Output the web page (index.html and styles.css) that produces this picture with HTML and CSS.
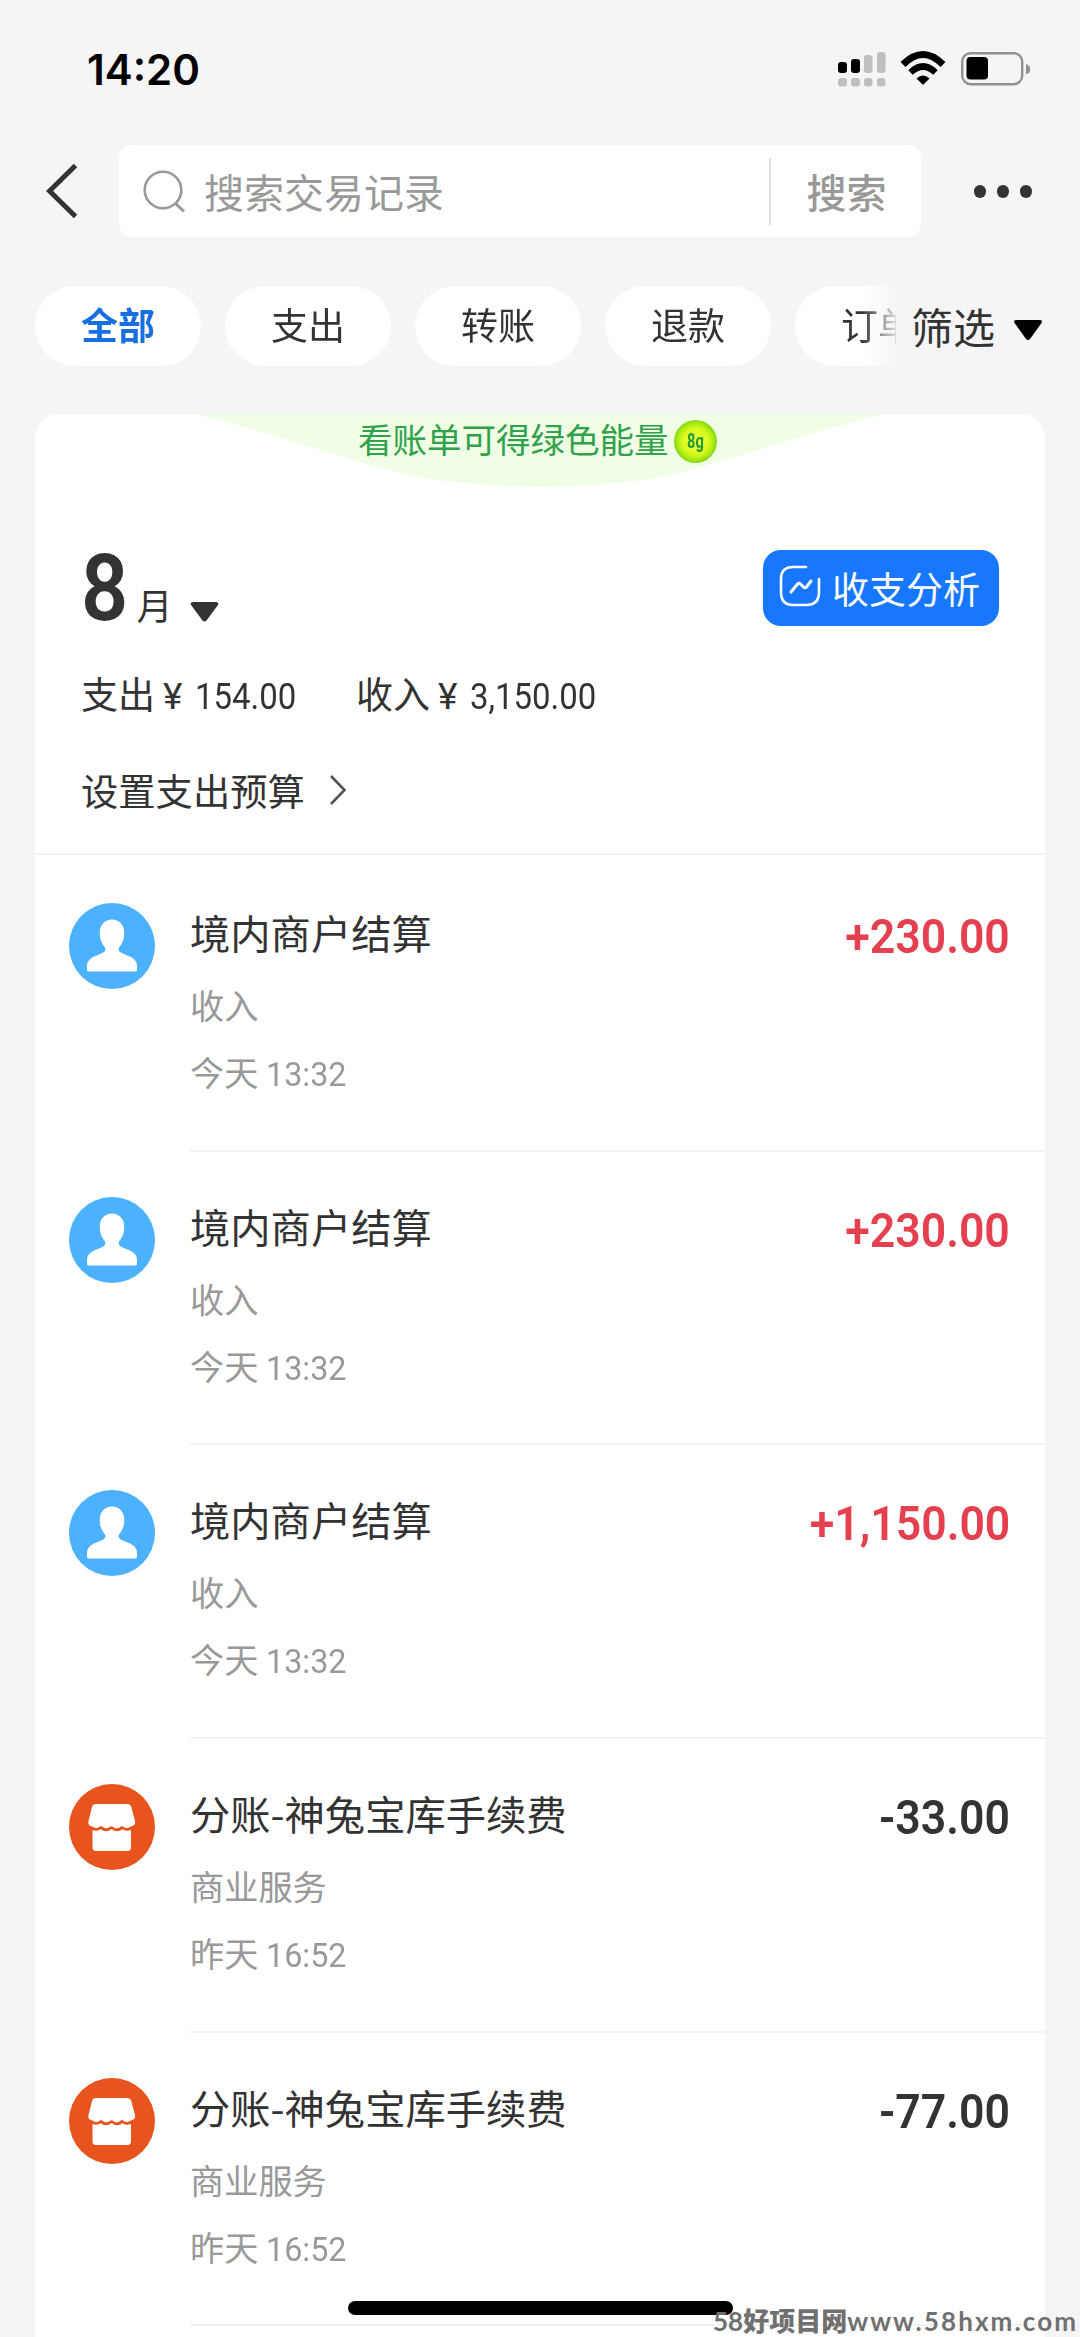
FILE: index.html
```html
<!DOCTYPE html>
<html lang="zh-CN">
<head>
    <meta charset="UTF-8">
    <meta name="viewport" content="width=device-width, initial-scale=1.0">
    <title>账单</title>
    <link rel="stylesheet" href="styles.css">
</head>
<body>
<!-- Shared icons -->
<svg class="sprite" width="0" height="0">
    <symbol id="icon-user" viewBox="0 0 86 86">
        <circle cx="43" cy="43" r="43" fill="#4cb1ff"/>
        <path d="M43 16.500c-7.500 0-12.300 5.500-12.300 13.500 0 6 2 10.500 5 14 1.500 2.500.5 4.500-1.500 5.500-5 2.500-9 3.500-12.500 6-3 2.500-3.700 5-3.700 8v3c0 1.500.7 2 2 2h46c1.300 0 2-.5 2-2v-3c0-3-.7-5.500-3.700-8-3.500-2.500-7.500-3.500-12.500-6-2-1-3-3-1.500-5.500 3-3.500 5-8 5-14 0-8-4.800-13.500-12.300-13.500z" fill="#fff"/>
    </symbol>
    <symbol id="icon-shop" viewBox="0 0 86 86">
        <circle cx="43" cy="43" r="43" fill="#e8541e"/>
        <path d="M27 20h31c2.200 0 3.800 1 4.300 3l3.700 14c.8 3-1 5-4.500 5.500q-3.500 3-7 .3-1.500-1.500-3 0-4 3-7.500 0-1.500-1.200-3 0-3.500 3-7.500 0-1.500-1.500-3 0-3.500 2.700-7-.3c-3.500-.5-4.500-2.500-4-5.500l3.500-14c.5-2 1.800-3 4-3z" fill="#fff"/>
        <path d="M23.500 46q4 2 8-.8 6 4 11-.3 5.500 4.300 11 .3 4 2.800 8.500.8v17c0 2.500-1 4-3.500 4h-31.500c-2.500 0-3.500-1.500-3.500-4z" fill="#fff"/>
    </symbol>
</svg>

<div class="phone">
    <div class="status-bar">
        <div class="clock">14:20</div>
        <div class="status-icons">
            <svg width="48" height="36" viewBox="0 0 48 36">
                <g fill="#000">
                    <rect x="0" y="11" width="9" height="11" rx="3"/>
                    <rect x="13" y="8" width="9" height="14" rx="3"/>
                </g>
                <g fill="#bfbfbf">
                    <rect x="26" y="4" width="8.500" height="18" rx="3"/>
                    <rect x="39" y="1" width="8.500" height="21" rx="3"/>
                    <rect x="0" y="27" width="9" height="8.500" rx="3"/>
                    <rect x="13" y="27" width="9" height="8.500" rx="3"/>
                    <rect x="26" y="27" width="8.500" height="8.500" rx="3"/>
                    <rect x="39" y="27" width="8.500" height="8.500" rx="3"/>
                </g>
            </svg>
            <svg class="wifi" width="46" height="36" viewBox="0 0 46 36">
                <path d="M3 13.500Q23-6.500 43 13.500" fill="none" stroke="#000" stroke-width="7"/>
                <path d="M10.500 21.500Q23 9.500 35.500 21.500" fill="none" stroke="#000" stroke-width="6.500"/>
                <path d="M16.500 27.500Q23 21.500 29.500 27.500L24 33q-1 1-2 0z" fill="#000"/>
            </svg>
            <svg class="battery" width="70" height="36" viewBox="0 0 70 36">
                <rect x="1.200" y="2.200" width="60" height="31" rx="8.500" fill="none" stroke="#919191" stroke-width="2.400"/>
                <rect x="5.500" y="6" width="21.500" height="22.500" rx="4" fill="#000"/>
                <path d="M65 13q5 1.500 4 7-1 3-4 3z" fill="#919191"/>
            </svg>
        </div>
    </div>

    <div class="nav">
        <svg class="back" width="32" height="56" viewBox="0 0 32 56">
            <path d="M29.500 2.500L3.500 28l26 25.500" fill="none" stroke="#333" stroke-width="5"/>
        </svg>
        <div class="search-box">
            <svg width="44" height="46" viewBox="0 0 44 46">
                <circle cx="20" cy="22" r="18.300" fill="none" stroke="#999" stroke-width="2.600"/>
                <path d="M32 35l9 8.500" stroke="#999" stroke-width="3"/>
            </svg>
            <div class="search-hint">搜索交易记录</div>
            <div class="search-btn">搜索</div>
        </div>
        <div class="more"><i></i><i></i><i></i></div>
    </div>

    <div class="filter-row">
        <div class="tabs">
            <div class="tab active">全部</div>
            <div class="tab">支出</div>
            <div class="tab">转账</div>
            <div class="tab">退款</div>
            <div class="tab">订单</div>
        </div>
        <div class="filter">筛选
            <svg width="30" height="22" viewBox="0 0 30 22"><path d="M3 1h24q3 .5 1.500 3L17 20q-2 2-4 0L1.500 4Q0 1.500 3 1z" fill="#000"/></svg>
        </div>
    </div>

    <div class="card">
        <div class="banner">
            <svg class="banner-bg" width="690" height="73" viewBox="0 0 690 73">
                <path d="M0 0C75 18 155 48 225 63Q345 83 465 63C535 48 610 18 690 0z" fill="#f0fee6"/>
            </svg>
            <span class="banner-text">看账单可得绿色能量</span>
            <span class="energy"><b>8g</b></span>
        </div>

        <div class="summary">
            <div class="month-row">
                <div class="month">
                    <span class="month-num">8</span>
                    <span class="month-unit">月</span>
                    <svg width="29" height="20" viewBox="0 0 29 20"><path d="M3 0h23q3.500.5 2 3L16.500 18.500q-2 2-4 0L1 3Q-.5.5 3 0z" fill="#333"/></svg>
                </div>
                <div class="analysis">
                    <svg width="42" height="42" viewBox="0 0 42 42" fill="none" stroke="#fff" stroke-width="2.600" stroke-linecap="round">
                        <path d="M27 2H14Q2 2 2 14v13q0 13 12 13h13q13 0 13-13V14"/>
                        <path d="M12 27l6.500-8q1.500-1.500 3 0l3 3q1.500 1.500 3 0l4.500-6" stroke-width="3"/>
                    </svg>
                    收支分析
                </div>
            </div>
            <div class="totals">
                <div class="total out">支出<span class="yen">¥</span><span class="num">154.00</span></div>
                <div class="total in">收入<span class="yen">¥</span><span class="num">3,150.00</span></div>
            </div>
            <div class="budget">设置支出预算
                <svg width="20" height="32" viewBox="0 0 20 32"><path d="M3 2l13.500 14L3 30" fill="none" stroke="#555" stroke-width="2.600"/></svg>
            </div>
        </div>

        <div class="list">
            <div class="row">
                <svg class="avatar"><use href="#icon-user"/></svg>
                <div class="row-body">
                    <div class="info">
                        <div class="title">境内商户结算</div>
                        <div class="kind">收入</div>
                        <div class="time">今天 <span class="num">13:32</span></div>
                    </div>
                    <div class="amount plus">+230.00</div>
                </div>
            </div>
            <div class="row">
                <svg class="avatar"><use href="#icon-user"/></svg>
                <div class="row-body">
                    <div class="info">
                        <div class="title">境内商户结算</div>
                        <div class="kind">收入</div>
                        <div class="time">今天 <span class="num">13:32</span></div>
                    </div>
                    <div class="amount plus">+230.00</div>
                </div>
            </div>
            <div class="row">
                <svg class="avatar"><use href="#icon-user"/></svg>
                <div class="row-body">
                    <div class="info">
                        <div class="title">境内商户结算</div>
                        <div class="kind">收入</div>
                        <div class="time">今天 <span class="num">13:32</span></div>
                    </div>
                    <div class="amount plus">+1,150.00</div>
                </div>
            </div>
            <div class="row">
                <svg class="avatar"><use href="#icon-shop"/></svg>
                <div class="row-body">
                    <div class="info">
                        <div class="title">分账-神兔宝库手续费</div>
                        <div class="kind">商业服务</div>
                        <div class="time">昨天 <span class="num">16:52</span></div>
                    </div>
                    <div class="amount">-33.00</div>
                </div>
            </div>
            <div class="row">
                <svg class="avatar"><use href="#icon-shop"/></svg>
                <div class="row-body">
                    <div class="info">
                        <div class="title">分账-神兔宝库手续费</div>
                        <div class="kind">商业服务</div>
                        <div class="time">昨天 <span class="num">16:52</span></div>
                    </div>
                    <div class="amount">-77.00</div>
                </div>
            </div>
        </div>
    </div>

    <div class="home-indicator"></div>
    <div class="watermark"><span class="lead">58</span><span class="cn">好项目网</span><span class="site">www.58hxm.com</span></div>
</div>
</body>
</html>
```
FILE: styles.css
```css
* {
    box-sizing: border-box;
}
body {
    margin: 0;
    background-color: #f5f5f5;
    color: #333;
    font-family: "Noto Sans CJK SC", sans-serif;
}
svg {
    display: block;
    flex-shrink: 0;
}
.sprite {
    position: absolute;
}
.phone {
    position: relative;
    width: 1080px;
    height: 2337px;
    overflow: hidden;
}

/* Status bar */
.status-bar {
    display: flex;
    justify-content: space-between;
    align-items: center;
    height: 138px;
    padding: 0 49px 0 87px;
}
.clock {
    font-family: Inter, sans-serif;
    font-size: 42px;
    font-weight: 600;
    color: #000;
}
.status-icons {
    display: flex;
    align-items: center;
}
.wifi {
    margin-left: 14px;
}
.battery {
    margin-left: 15px;
}

/* Search */
.nav {
    display: flex;
    align-items: center;
    height: 92px;
    margin-top: 7px;
    padding: 0 48px 0 46px;
}
.search-box {
    display: flex;
    align-items: center;
    width: 802px;
    height: 92px;
    margin-left: 41px;
    padding-left: 24px;
    background-color: #fff;
    border-radius: 13px;
}
.search-hint {
    flex: 1;
    margin-left: 17px;
    font-size: 40px;
    line-height: 60px;
    color: #999;
}
.search-btn {
    width: 152px;
    height: 67px;
    padding-left: 36px;
    border-left: 2px solid #e0e0e0;
    font-size: 40px;
    font-weight: 500;
    line-height: 66px;
    color: #999;
}
.more {
    display: flex;
    gap: 10.500px;
    margin-left: 53px;
}
.more i {
    width: 12.500px;
    height: 13px;
    border-radius: 50%;
    background-color: #333;
}

/* Category tabs */
.filter-row {
    display: flex;
    height: 80px;
    margin-top: 49px;
    padding-left: 35px;
}
.tabs {
    display: flex;
    gap: 24px;
    width: 861px;
    overflow: hidden;
    -webkit-mask-image: linear-gradient(to right, #000 826px, transparent 866px);
    mask-image: linear-gradient(to right, #000 826px, transparent 866px);
}
.tab {
    flex: 0 0 166px;
    border-radius: 40px;
    background-color: #fff;
    font-size: 37px;
    line-height: 77px;
    text-align: center;
}
.tab.active {
    color: #1a6fe0;
    font-weight: 700;
}
.filter {
    display: flex;
    align-items: center;
    gap: 18px;
    margin-left: 15px;
    font-size: 42px;
    line-height: 60px;
}
.filter svg {
    margin-top: 8px;
}

/* Bill card */
.card {
    width: 1010px;
    height: 1950px;
    margin: 48px 0 0 35px;
    background-color: #fff;
    border-radius: 24px 24px 0 0;
    overflow: hidden;
}
.banner {
    position: relative;
    display: flex;
    height: 73px;
    padding-left: 323px;
    color: #2fa24a;
}
.banner-bg {
    position: absolute;
    left: 160px;
    top: 0;
}
.banner-text {
    position: relative;
    font-size: 34.500px;
    line-height: 49px;
}
.energy {
    position: relative;
    width: 43px;
    height: 43px;
    margin: 6px 0 0 5px;
    border: 2px solid #8fdc1c;
    border-radius: 50%;
    background: radial-gradient(circle, #f2ff3c 15%, #d3f81c 50%, #95e312 72%);
    text-align: center;
}
.energy b {
    display: block;
    font-family: Roboto, sans-serif;
    font-size: 21px;
    line-height: 39px;
    color: #219a32;
    transform: scaleX(0.7);
}
.summary {
    height: 368px;
    padding: 63px 46px 0 46px;
    border-bottom: 2px solid #f3f3f3;
}
.month-row {
    display: flex;
    justify-content: space-between;
    height: 76px;
}
.month {
    display: flex;
    align-items: baseline;
    padding-top: 1px;
}
.month-num {
    font-family: Roboto, sans-serif;
    font-size: 92px;
    font-weight: 600;
    line-height: 76px;
    transform: scaleX(0.9);
    transform-origin: left;
}
.month-unit {
    margin: 0 17px 0 3px;
    font-size: 36px;
    line-height: 40px;
}
.month svg {
    margin-bottom: -2px;
    transform: translateY(2px);
}
.analysis {
    display: flex;
    align-items: center;
    gap: 11px;
    width: 236px;
    height: 76px;
    padding: 0 0 0 16px;
    border-radius: 18px;
    background-color: #1777ff;
    color: #fff;
    font-size: 37px;
}
.analysis svg {
    margin-bottom: 4px;
}
.totals {
    display: flex;
    height: 50px;
    margin-top: 42px;
    font-size: 37px;
    line-height: 50px;
}
.total {
    display: flex;
    align-items: baseline;
}
.total.out {
    width: 275px;
}
.yen,
.num {
    display: inline-block;
    font-family: Roboto, sans-serif;
    transform: scaleX(0.89);
    transform-origin: left;
}
.yen {
    width: 32px;
    margin-left: 8px;
    font-size: 37px;
    transform: none;
}
.budget {
    display: flex;
    align-items: center;
    gap: 23px;
    height: 50px;
    margin-top: 47px;
    font-size: 37.300px;
    line-height: 50px;
}

/* Transactions */
.list {
    padding-top: 3px;
}
.row {
    display: flex;
    height: 293.700px;
    padding-left: 34px;
}
.avatar {
    width: 86px;
    height: 86px;
    margin-top: 45px;
}
.row-body {
    flex: 1;
    display: flex;
    justify-content: space-between;
    margin-left: 35px;
    padding: 44px 35px 0 0;
    border-bottom: 2px solid #f3f3f3;
}
.title {
    font-size: 40.300px;
    line-height: 60px;
}
.kind,
.time {
    font-size: 34.200px;
    line-height: 46px;
    color: #999;
}
.kind {
    margin-top: 19px;
}
.time {
    margin-top: 21px;
}
.time .num {
    font-size: 34px;
    transform: scaleX(0.95);
}
.amount {
    font-family: Roboto, sans-serif;
    font-size: 49px;
    font-weight: 600;
    line-height: 69px;
    transform: scaleX(0.91);
    transform-origin: right;
}
.amount.plus {
    color: #e5404f;
}

/* Overlays */
.home-indicator {
    position: absolute;
    left: 348px;
    bottom: 22px;
    width: 385px;
    height: 14px;
    border-radius: 7px;
    background-color: #000;
}
.watermark {
    position: absolute;
    left: 713px;
    bottom: 1px;
    display: flex;
    font-family: Lato, "Noto Sans CJK SC", sans-serif;
    font-size: 26px;
    font-weight: 700;
    line-height: 30px;
    color: #707070;
    white-space: nowrap;
}
.watermark .cn {
    font-weight: 900;
}
.watermark .site {
    letter-spacing: 2.100px;
}
```
